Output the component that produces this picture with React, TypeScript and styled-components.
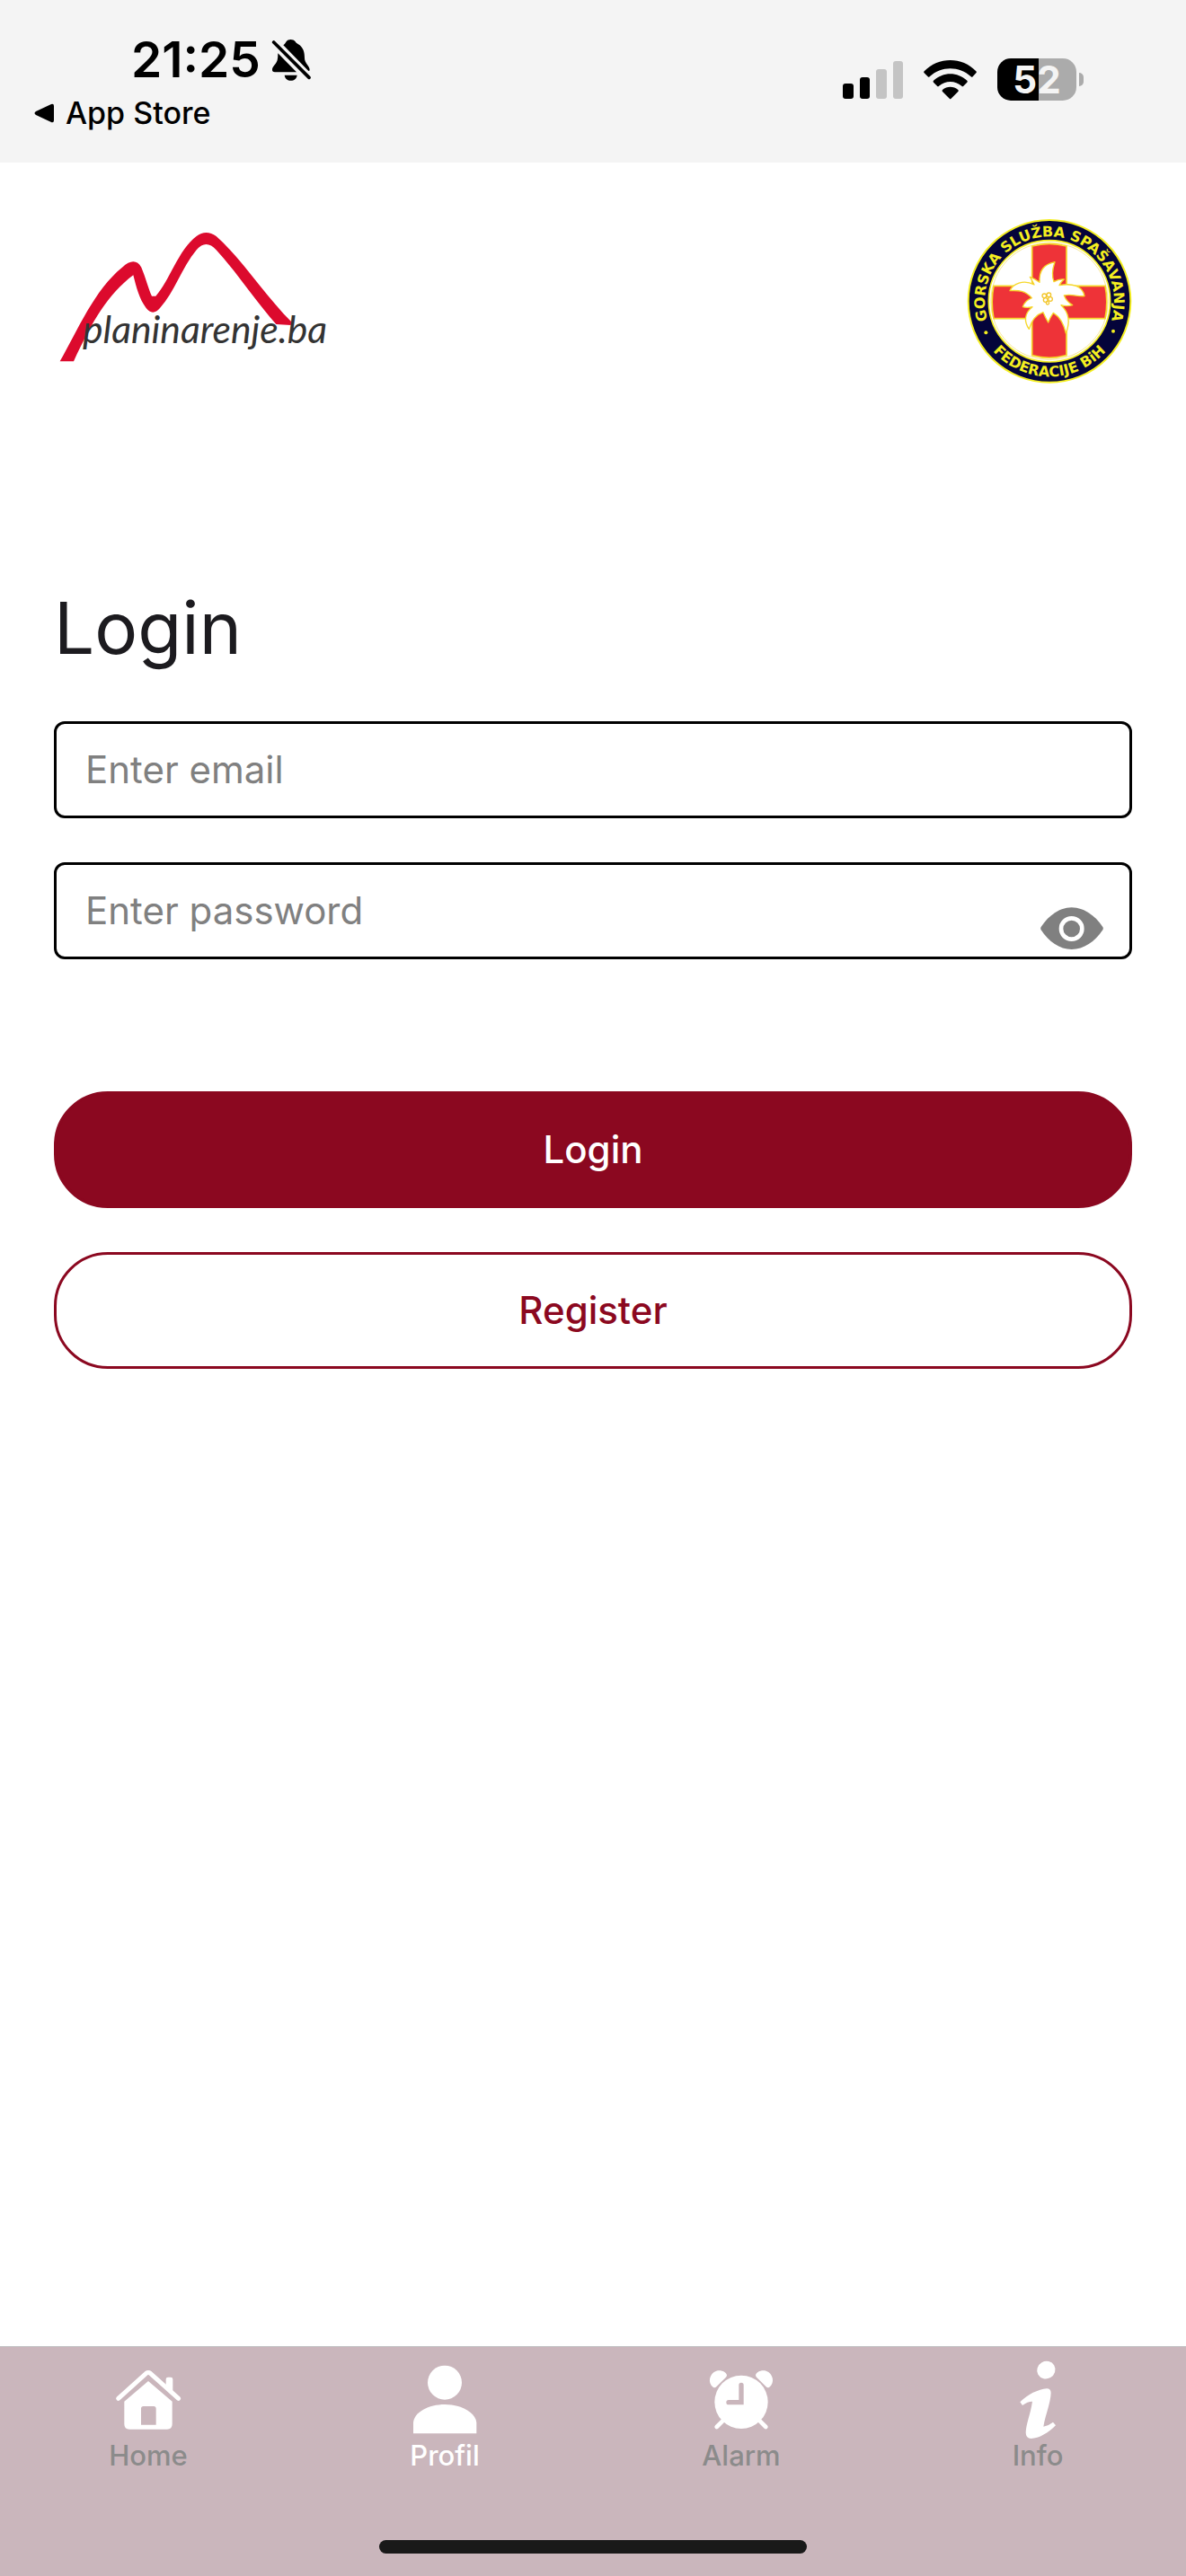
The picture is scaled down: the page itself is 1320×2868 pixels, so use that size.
import { useState } from "react";
import styled, { createGlobalStyle } from "styled-components";

const GlobalStyle = createGlobalStyle`
    * {
        box-sizing: border-box;
    }
    body {
        margin: 0;
        background: #ffffff;
        font-family: Inter, "Liberation Sans", sans-serif;
    }
`;
const StyledPage = styled.div`
    min-height: 100vh;
    display: flex;
    flex-direction: column;
`;
const StyledStatusBar = styled.div`
    display: flex;
    justify-content: space-between;
    align-items: flex-start;
    padding: 40px 114px 34px 38px;
    background: #f4f4f4;
    color: #000000;
`;
const StyledStatusLeft = styled.div`
    display: flex;
    flex-direction: column;
    gap: 12px;
`;
const StyledClock = styled.div`
    display: flex;
    align-items: center;
    gap: 12px;
    padding-left: 108px;
    font-size: 55px;
    font-weight: 600;
    line-height: 53px;
`;
const StyledBack = styled.a`
    display: flex;
    align-items: center;
    gap: 12px;
    color: #000000;
    font-size: 34px;
    font-weight: 500;
    line-height: 42px;
    text-decoration: none;
`;
const StyledStatusRight = styled.div`
    display: flex;
    align-items: center;
    gap: 23px;
    padding-top: 25px;
`;
const StyledBattery = styled.div`
    display: flex;
    align-items: center;
    gap: 3px;
`;
const StyledBatteryLevel = styled.div<{ $level: number }>`
    width: 88px;
    height: 47px;
    border-radius: 15px;
    background: linear-gradient(to right, #000000 ${(p) => p.$level}%, #ababab ${(p) => p.$level}%);
    color: #f4f4f4;
    font-size: 42px;
    font-weight: 700;
    line-height: 47px;
    text-align: center;
`;
const StyledBatteryTip = styled.div`
    width: 5px;
    height: 15px;
    border-radius: 0 5px 5px 0;
    background: #ababab;
`;
const StyledHeader = styled.header`
    display: flex;
    justify-content: space-between;
    align-items: center;
    padding: 63px 60px 0;
`;
const StyledForm = styled.form`
    display: flex;
    flex-direction: column;
    padding: 220px 60px 60px;
`;
const StyledTitle = styled.h1`
    margin: 0 0 52px;
    color: #1c1b1f;
    font-size: 80px;
    font-weight: 400;
    line-height: 104px;
`;
const StyledField = styled.div`
    position: relative;
    margin-bottom: 49px;
`;
const StyledInput = styled.input`
    display: block;
    width: 100%;
    height: 108px;
    padding: 0 32px 2px;
    border: 3px solid #000000;
    border-radius: 12px;
    background: #ffffff;
    color: #1c1b1f;
    font-family: inherit;
    font-size: 42px;
    &::placeholder{
        color: #808080;
        opacity: 1;
    }
`;
const StyledEye = styled.button`
    position: absolute;
    right: 32px;
    bottom: 10px;
    display: flex;
    padding: 0;
    border: none;
    background: none;
    cursor: pointer;
`;
const StyledActions = styled.div`
    display: flex;
    flex-direction: column;
    gap: 49px;
    margin-top: 98px;
`;
const StyledButton = styled.button<{ $outline?: boolean }>`
    width: 100%;
    height: 130px;
    padding: 0 0 2px;
    border: 3px solid #8b0820;
    border-radius: 60px;
    background: ${(p) => (p.$outline ? "#ffffff" : "#8b0820")};
    color: ${(p) => (p.$outline ? "#8b0820" : "#ffffff")};
    font-family: inherit;
    font-size: 42px;
    font-weight: 500;
    cursor: pointer;
`;
const StyledFooter = styled.footer`
    display: flex;
    flex-direction: column;
    align-items: center;
    margin-top: auto;
    padding-bottom: 25px;
    border-top: 1px solid #c4c4c6;
    background: #cab6bc;
`;
const StyledNav = styled.nav`
    display: grid;
    grid-template-columns: repeat(4, 1fr);
    width: 100%;
    margin-bottom: 75px;
`;
const StyledTab = styled.a<{ $active?: boolean }>`
    display: flex;
    flex-direction: column;
    align-items: center;
    padding-top: 12px;
    color: ${(p) => (p.$active ? "#ffffff" : "#8b8b8b")};
    font-size: 31px;
    font-weight: 500;
    line-height: 38px;
    text-decoration: none;
`;
const StyledHomeIndicator = styled.div`
    width: 36%;
    height: 15px;
    border-radius: 8px;
    background: #191919;
`;

function BellOffIcon() {
    return (
        <svg width="44" height="48" viewBox="0 0 132 144" aria-hidden="true">
            <path d="M40 22C46 17 47 15 50 10C56 1 73 1 80 10C82 14 85 16 90 19C107 29 111 46 111 65C111 81 128 92 128 104Q128 108 124 108Z" />
            <path d="M22 49L84 112H12Q2 112 3 102C5 91 16 86 20 72Q22 63 22 49Z" />
            <path d="M44 122H86C84 134 76 140 65 140S46 134 44 122Z" />
            <path d="M8 12L126 130" stroke="#000000" strokeWidth="11" strokeLinecap="round" />
        </svg>
    );
}

function WordmarkLogo() {
    return (
        <svg width="306" height="183" viewBox="60 11 918 549" role="img" aria-label="planinarenje.ba">
            <path
                fill="#dc0a2d"
                d="M80 486C140 380 196 246 288 172Q330 134 352 172C368 210 374 240 387 268H400C446 218 476 112 536 68Q568 44 602 68C690 146 764 266 855 356L851 365L802 362C730 280 670 188 602 114Q568 76 536 114C486 174 464 254 414 308Q390 336 368 308C344 276 336 240 325 198C240 262 188 352 126 486Z"
            />
            <text x="156" y="425" fill="#333333" fontFamily="Lato, sans-serif" fontStyle="italic" fontSize="128">
                planinarenje.ba
            </text>
        </svg>
    );
}

function RescueLogo() {
    return (
        <svg width="184" height="183" viewBox="49 41 552 549" role="img" aria-label="Gorska služba spašavanja">
            <defs>
                <path id="ring-top" d="M148 439A216 216 0 1 1 502 439" />
                <path id="ring-bottom" d="M97 422A252 252 0 0 0 553 422" />
            </defs>
            <circle cx="325" cy="315" r="271" fill="#04043a" stroke="#f4ee20" strokeWidth="6" />
            <circle cx="325" cy="315" r="203" fill="#ffffff" stroke="#f4ee20" strokeWidth="5" />
            <circle cx="325" cy="315" r="196" fill="none" stroke="#f7e79a" strokeWidth="3" />
            <path
                fill="#ee3338"
                stroke="#f6d82b"
                strokeWidth="5"
                d="M267 131Q325 115 382 131V264H511Q522 318 511 373H382V496Q325 512 267 496V373H139Q128 318 139 264H267Z"
            />
            <path
                fill="#ffffff"
                stroke="#f6d82b"
                strokeWidth="4"
                strokeLinejoin="round"
                d="M292 252C290 212 306 192 343 184C334 210 332 228 340 250Q356 240 374 242Q364 250 358 262C402 254 436 264 442 298C418 300 398 290 374 296Q382 316 402 328Q382 334 364 328C390 352 396 382 380 422C372 388 358 366 338 354Q328 368 321 386Q312 370 304 352C282 360 266 376 257 408C240 384 240 356 268 334Q250 338 236 334Q242 314 266 304C244 280 222 278 193 280C202 258 238 240 274 260Q268 246 260 234Q278 240 292 252Z"
            />
            <g fill="none" stroke="#f3c72e" strokeWidth="4">
                <circle cx="308" cy="297" r="7" />
                <circle cx="323" cy="294" r="7" />
                <circle cx="328" cy="308" r="7" />
                <circle cx="312" cy="311" r="7" />
                <circle cx="319" cy="321" r="5" />
            </g>
            <circle cx="113" cy="420" r="6" fill="#f4ee20" />
            <circle cx="538" cy="415" r="6" fill="#f4ee20" />
            <g fill="#f4ee20" fontFamily="DejaVu Sans, sans-serif" fontSize="48" fontWeight="700" textAnchor="middle">
                <text>
                    <textPath href="#ring-top" startOffset="50%">GORSKA SLUŽBA SPAŠAVANJA</textPath>
                </text>
                <text>
                    <textPath href="#ring-bottom" startOffset="50%">FEDERACIJE BiH</textPath>
                </text>
            </g>
        </svg>
    );
}

function HomeIcon() {
    return (
        <svg width="76" height="90" viewBox="141 76 228 270" fill="#ffffff" aria-hidden="true">
            <path d="M155 212L248 128Q255 123 262 128L356 212" fill="none" stroke="#ffffff" strokeWidth="15" strokeLinecap="round" />
            <path d="M314 172V148Q314 141 321 141H330Q337 141 337 148V194Z" />
            <path
                fillRule="evenodd"
                d="M255 154L335 222V298Q335 315 318 315H192Q175 315 175 298V222ZM231 300H281V246Q281 238 273 238H239Q231 238 231 246Z"
            />
        </svg>
    );
}

function ProfileIcon() {
    return (
        <svg width="76" height="90" viewBox="1132 76 228 270" fill="#ffffff" aria-hidden="true">
            <circle cx="1246" cy="159" r="57" />
            <path d="M1141 329V292C1144 258 1192 232 1246 232S1348 258 1352 292V329Z" />
        </svg>
    );
}

function AlarmIcon() {
    return (
        <svg width="76" height="90" viewBox="143 76 228 270" fill="#ffffff" aria-hidden="true">
            <circle cx="257" cy="224" r="89" />
            <path d="M163 174C144 160 150 128 174 120C192 116 206 124 209 134Q209 138 206 141L174 173Q169 178 163 174Z" />
            <path d="M351 174C370 160 364 128 340 120C322 116 308 124 305 134Q305 138 308 141L340 173Q345 178 351 174Z" />
            <path d="M198 284L175 307M316 284L339 307" stroke="#ffffff" strokeWidth="14" strokeLinecap="round" />
            <path d="M257 167V225H215" fill="none" stroke="#cab6bc" strokeWidth="16" strokeLinecap="round" />
        </svg>
    );
}

function InfoIcon() {
    return (
        <svg width="76" height="90" viewBox="1136 76 228 270" fill="#ffffff" aria-hidden="true">
            <ellipse cx="1278" cy="117" rx="31" ry="29" transform="rotate(-30 1278 117)" />
            <path d="M1191 224C1216 198 1252 182 1280 179Q1294 179 1294 194C1293 226 1276 266 1269 306Q1285 304 1301 291L1310 302C1286 326 1254 346 1228 346Q1210 346 1210 326C1211 296 1226 264 1232 222Q1216 222 1199 235Z" />
        </svg>
    );
}

const tabs = [
    { label: "Home", icon: <HomeIcon /> },
    { label: "Profil", icon: <ProfileIcon />, active: true },
    { label: "Alarm", icon: <AlarmIcon /> },
    { label: "Info", icon: <InfoIcon /> },
];

export default function App() {
    const [isPasswordVisible, setPasswordVisible] = useState(false);

    return (
        <StyledPage>
            <GlobalStyle />
            <StyledStatusBar>
                <StyledStatusLeft>
                    <StyledClock>
                        <span>21:25</span>
                        <BellOffIcon />
                    </StyledClock>
                    <StyledBack href="#">
                        <svg width="23" height="22" viewBox="0 0 23 22" aria-hidden="true">
                            <path d="M2 9L19 1Q22 0 22 3V19Q22 22 19 21L2 13Q-1 11 2 9Z" />
                        </svg>
                        App Store
                    </StyledBack>
                </StyledStatusLeft>
                <StyledStatusRight>
                    <svg width="67" height="43" viewBox="0 0 67 43" aria-hidden="true">
                        <rect x="0" y="26" width="12" height="17" rx="3" />
                        <rect x="19" y="19" width="11" height="24" rx="3" />
                        <rect x="37" y="10" width="12" height="33" rx="3" fill="#c4c4c4" />
                        <rect x="56" y="1" width="11" height="42" rx="3" fill="#c4c4c4" />
                    </svg>
                    <svg width="59" height="44" viewBox="385 79 177 132" aria-hidden="true">
                        <path d="M387 122Q384 119 387 116C434 67 514 67 560 116Q563 119 560 122L549 134Q546 137 543 134C504 98 444 98 405 134Q402 137 399 134Z" />
                        <path d="M418 153Q415 150 418 147C450 117 498 117 530 147Q533 150 530 153L518 165Q515 168 512 165C490 146 458 146 436 165Q433 168 430 165Z" />
                        <path d="M448 184Q445 181 448 178C463 165 485 165 500 178Q503 181 500 184L476 208Q474 210 472 208Z" />
                    </svg>
                    <StyledBattery>
                        <StyledBatteryLevel $level={52}>52</StyledBatteryLevel>
                        <StyledBatteryTip />
                    </StyledBattery>
                </StyledStatusRight>
            </StyledStatusBar>
            <StyledHeader>
                <WordmarkLogo />
                <RescueLogo />
            </StyledHeader>
            <StyledForm onSubmit={(e) => e.preventDefault()}>
                <StyledTitle>Login</StyledTitle>
                <StyledField>
                    <StyledInput type="email" placeholder="Enter email" aria-label="Email" />
                </StyledField>
                <StyledField>
                    <StyledInput
                        type={isPasswordVisible ? "text" : "password"}
                        placeholder="Enter password"
                        aria-label="Password"
                    />
                    <StyledEye
                        type="button"
                        aria-label="Show password"
                        onClick={() => setPasswordVisible(!isPasswordVisible)}
                    >
                        <svg width="70" height="48" viewBox="174 210 210 144" aria-hidden="true">
                            <path
                                fill="#808080"
                                d="M176 276C202 236 240 211 278 211S356 236 382 276Q385 281 382 286C356 326 318 351 278 351S202 326 176 286Q173 281 176 276Z"
                            />
                            <circle cx="278" cy="282" r="35" fill="none" stroke="#ffffff" strokeWidth="14" />
                        </svg>
                    </StyledEye>
                </StyledField>
                <StyledActions>
                    <StyledButton type="submit">Login</StyledButton>
                    <StyledButton type="button" $outline>Register</StyledButton>
                </StyledActions>
            </StyledForm>
            <StyledFooter>
                <StyledNav>
                    {tabs.map((tab) => (
                        <StyledTab key={tab.label} href="#" $active={tab.active}>
                            {tab.icon}
                            {tab.label}
                        </StyledTab>
                    ))}
                </StyledNav>
                <StyledHomeIndicator />
            </StyledFooter>
        </StyledPage>
    );
}
